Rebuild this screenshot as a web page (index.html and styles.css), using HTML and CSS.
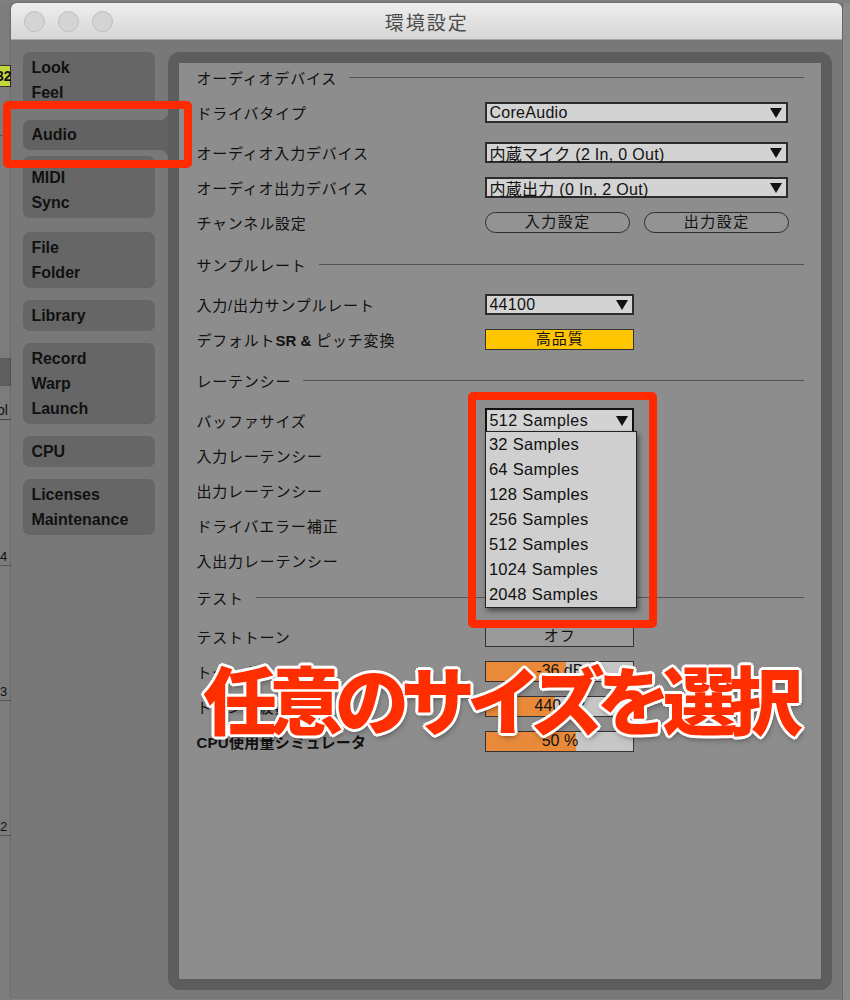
FILE: index.html
```html
<!DOCTYPE html>
<html lang="ja">
  <head>
    <meta charset="utf-8">
    <title>環境設定</title>
    <link rel="stylesheet" href="styles.css">
  </head>
  <body>
    <div class="desk">
      <div class="edge-left">
        <div class="clip-tag">32</div>
        <div class="edge-line"></div>
        <div class="edge-block"></div>
        <div class="edge-text">ol</div>
        <div class="edge-num first">4</div>
        <div class="edge-num">3</div>
        <div class="edge-num">2</div>
      </div>

      <div class="window">
        <div class="titlebar">
          <div class="lights"><span></span><span></span><span></span></div>
          <div class="title">環境設定</div>
          <div></div>
        </div>

        <div class="win-body">
          <div class="sidebar">
            <div class="tab-group"><div>Look</div><div>Feel</div></div>
            <div class="tab-group selected"><div>Audio</div></div>
            <div class="tab-group after-sel"><div>MIDI</div><div>Sync</div></div>
            <div class="tab-group"><div>File</div><div>Folder</div></div>
            <div class="tab-group"><div>Library</div></div>
            <div class="tab-group"><div>Record</div><div>Warp</div><div>Launch</div></div>
            <div class="tab-group"><div>CPU</div></div>
            <div class="tab-group"><div>Licenses</div><div>Maintenance</div></div>
          </div>

          <div class="panel">
            <div class="head"><span>オーディオデバイス</span></div>
            <div class="row mt4">
              <label>ドライバタイプ</label>
              <div class="drop wide">CoreAudio</div>
            </div>
            <div class="row mt5">
              <label>オーディオ入力デバイス</label>
              <div class="drop wide">内蔵マイク (2 In, 0 Out)</div>
            </div>
            <div class="row">
              <label>オーディオ出力デバイス</label>
              <div class="drop wide">内蔵出力 (0 In, 2 Out)</div>
            </div>
            <div class="row">
              <label>チャンネル設定</label>
              <div class="pills">
                <div class="pill">入力設定</div>
                <div class="pill">出力設定</div>
              </div>
            </div>

            <div class="head mt10"><span>サンプルレート</span></div>
            <div class="row mt9">
              <label>入力/出力サンプルレート</label>
              <div class="drop narrow">44100</div>
            </div>
            <div class="row">
              <label>デフォルト<b>SR &amp;</b> ピッチ変換</label>
              <div class="box narrow quality">高品質</div>
            </div>

            <div class="head mt9"><span>レーテンシー</span></div>
            <div class="row mt9">
              <label>バッファサイズ</label>
              <div class="drop narrow open">512 Samples
                <ul class="menu">
                  <li>32 Samples</li>
                  <li>64 Samples</li>
                  <li>128 Samples</li>
                  <li>256 Samples</li>
                  <li>512 Samples</li>
                  <li>1024 Samples</li>
                  <li>2048 Samples</li>
                </ul>
              </div>
            </div>
            <div class="row"><label>入力レーテンシー</label></div>
            <div class="row"><label>出力レーテンシー</label></div>
            <div class="row"><label>ドライバエラー補正</label></div>
            <div class="row"><label>入出力レーテンシー</label></div>

            <div class="head mt5"><span>テスト</span></div>
            <div class="row mt8">
              <label>テストトーン</label>
              <div class="box narrow">オフ</div>
            </div>
            <div class="row">
              <label>トーンボリューム</label>
              <div class="meter narrow">
                <span class="fill" style="width: 54%"></span>
                <span class="value">-36 dB</span>
              </div>
            </div>
            <div class="row">
              <label>トーン周波数</label>
              <div class="meter narrow">
                <span class="fill" style="width: 47%"></span>
                <span class="value">440 Hz</span>
              </div>
            </div>
            <div class="row">
              <label class="strong">CPU使用量シミュレータ</label>
              <div class="meter narrow">
                <span class="fill" style="width: 61%"></span>
                <span class="value">50 %</span>
              </div>
            </div>
          </div>
        </div>
      </div>

      <div class="edge-right"></div>

      <!-- annotation overlays -->
      <div class="mark mark-tab"></div>
      <div class="mark mark-buffer"></div>
      <div class="caption">任意のサイズを選択</div>
    </div>
  </body>
</html>
```

FILE: styles.css
```css
body {
  margin: 0;
  background: #7e7e7e;
  font-family: "Liberation Sans", "Noto Sans CJK JP", sans-serif;
  color: #111;
}

.desk {
  position: relative;
  display: flex;
  width: 850px;
  height: 1000px;
  padding-top: 3px;
  box-sizing: border-box;
  overflow: hidden;
  background: #808080;
}

/* bits of the app behind the window */
.edge-left {
  width: 12px;
  display: flex;
  flex-direction: column;
  overflow: hidden;
  background: #7c7c7c;
}

.clip-tag {
  margin-top: 62px;
  height: 20px;
  background: #c3d63a;
  border: 1px solid #333;
  border-left: 0;
  font-size: 14px;
  font-weight: bold;
  line-height: 20px;
  text-indent: -4px;
}

.edge-line {
  margin-top: 48px;
  height: 1px;
  background: #5a5a5a;
}

.edge-block {
  margin-top: 222px;
  height: 28px;
  background: #5e5e5e;
}

.edge-text {
  margin-top: 15px;
  font-size: 14px;
  line-height: 18px;
  text-indent: -3px;
  border-bottom: 1px solid #444;
}

.edge-num {
  margin-top: 118px;
  font-size: 13px;
  line-height: 16px;
  border-bottom: 1px solid #555;
}

.edge-num.first {
  margin-top: 129px;
}

.edge-right {
  width: 7px;
  background: #8a8a8a;
  border-left: 1px solid #666;
}

/* window */
.window {
  width: 831px;
  height: 994px;
  display: flex;
  flex-direction: column;
  background: #787878;
  border-radius: 6px 6px 0 0;
  box-shadow: 0 0 2px rgba(0, 0, 0, 0.45);
}

.titlebar {
  height: 37px;
  box-sizing: border-box;
  display: grid;
  grid-template-columns: 1fr auto 1fr;
  align-items: center;
  background: linear-gradient(#eeeeee, #d6d6d6);
  border-bottom: 1px solid #a8a8a8;
  border-radius: 6px 6px 0 0;
}

.lights {
  display: flex;
  gap: 13px;
  padding-left: 13px;
}

.lights span {
  width: 19px;
  height: 19px;
  border-radius: 50%;
  background: #d4d4d4;
  border: 1px solid #bdbdbd;
}

.title {
  font-family: "Noto Sans CJK JP", sans-serif;
  font-size: 19px;
  letter-spacing: 2px;
  color: #4a4a4a;
  padding-top: 1px;
}

.win-body {
  flex: 1;
  display: flex;
  gap: 13px;
  padding: 12px 10px 7px 12px;
}

/* sidebar */
.sidebar {
  width: 132px;
  display: flex;
  flex-direction: column;
}

.tab-group {
  background: #666666;
  border-radius: 7px;
  padding: 3px 8px;
  margin-bottom: 12px;
}

.tab-group div {
  height: 25px;
  line-height: 25px;
  font-size: 16px;
  font-weight: bold;
  color: #111;
}

.tab-group.selected {
  position: relative;
  width: 145px;
  box-sizing: border-box;
  height: 30px;
  padding: 2px 8px;
  border-radius: 7px 0 0 7px;
  background: #626262;
  margin-bottom: 6px;
}

.tab-group.selected::before,
.tab-group.selected::after {
  content: "";
  position: absolute;
  right: 0;
  width: 9px;
  height: 9px;
}

.tab-group.selected::before {
  top: -9px;
  background: radial-gradient(circle at 0 0, transparent 9px, #626262 9.5px);
}

.tab-group.selected::after {
  bottom: -9px;
  background: radial-gradient(circle at 0 100%, transparent 9px, #626262 9.5px);
}

.tab-group.after-sel {
  padding-top: 9px;
  margin-bottom: 14px;
}

/* main panel */
.panel {
  position: relative;
  width: 664px;
  box-sizing: border-box;
  border: 11px solid #5d5d5d;
  border-radius: 12px;
  background: #8d8d8d;
  padding: 0 17px;
  font-size: 15px;
}

.head {
  display: flex;
  align-items: center;
  height: 28px;
  letter-spacing: 0.8px;
  font-family: "Noto Sans CJK JP", sans-serif;
}

.head::after {
  content: "";
  flex: 1;
  height: 1px;
  margin-left: 12px;
  background: #555;
}

.row {
  display: flex;
  align-items: center;
  height: 35px;
}

.row label {
  width: 289px;
  flex-shrink: 0;
  letter-spacing: 0.8px;
}

.row label b {
  letter-spacing: 0;
}

.row label.strong {
  font-weight: bold;
  letter-spacing: 0.3px;
}

.mt4 { margin-top: 4px; }
.mt5 { margin-top: 5px; }
.mt8 { margin-top: 8px; }
.mt9 { margin-top: 9px; }
.mt10 { margin-top: 10px; }

.wide { width: 303px; }
.narrow { width: 149px; }

.drop {
  position: relative;
  box-sizing: border-box;
  height: 21px;
  display: flex;
  align-items: center;
  justify-content: space-between;
  padding: 0 4px 0 2px;
  background: #d3d3d3;
  border: 2px solid #2c2c2c;
  font-size: 16px;
  letter-spacing: 0.3px;
  white-space: nowrap;
}

.drop::after {
  content: "";
  border-left: 6px solid transparent;
  border-right: 6px solid transparent;
  border-top: 10px solid #111;
}

.drop.open {
  height: 25px;
  border: 2.5px solid #111;
  letter-spacing: 0.5px;
}

.menu {
  position: absolute;
  top: 100%;
  left: -2.5px;
  width: 152px;
  box-sizing: border-box;
  margin: 0;
  padding: 0;
  list-style: none;
  background: #cfcfcf;
  border: 1.5px solid #222;
  box-shadow: 2px 3px 5px rgba(0, 0, 0, 0.45);
  z-index: 2;
}

.menu li {
  height: 25px;
  line-height: 25px;
  padding-left: 3px;
  font-size: 16.5px;
  letter-spacing: 0.3px;
}

.pills {
  display: flex;
  gap: 14px;
}

.pill {
  box-sizing: border-box;
  width: 145px;
  height: 21px;
  line-height: 18px;
  text-align: center;
  border: 1.5px solid #2d2d2d;
  border-radius: 11px;
  background: #939393;
  letter-spacing: 1.5px;
}

.box {
  box-sizing: border-box;
  height: 21px;
  line-height: 18px;
  text-align: center;
  border: 1.5px solid #333;
  background: #9a9a9a;
  letter-spacing: 1px;
}

.box.quality {
  background: #ffc500;
}

.meter {
  box-sizing: border-box;
  height: 21px;
  display: grid;
  border: 1.5px solid #333;
  background: #c6c6c6;
}

.meter .fill,
.meter .value {
  grid-area: 1 / 1;
}

.meter .fill {
  background: #e9893a;
}

.meter .value {
  text-align: center;
  line-height: 18px;
  font-size: 16px;
}

/* annotations */
.mark {
  position: absolute;
  box-sizing: border-box;
  border: 8px solid #ff2a00;
  border-radius: 5px;
  z-index: 3;
}

.mark-tab {
  left: 3px;
  top: 101px;
  width: 189px;
  height: 67px;
}

.mark-buffer {
  left: 468px;
  top: 392px;
  width: 189px;
  height: 236px;
}

.caption {
  position: absolute;
  left: 203px;
  top: 660px;
  z-index: 4;
  font-family: "Noto Sans CJK JP", sans-serif;
  font-weight: 900;
  font-size: 74px;
  line-height: 1;
  letter-spacing: -8px;
  color: #ff2e00;
  white-space: nowrap;
  text-shadow:
    3px 0 #fff, -3px 0 #fff, 0 3px #fff, 0 -3px #fff,
    2px 2px #fff, -2px -2px #fff, 2px -2px #fff, -2px 2px #fff,
    1px 3px 6px rgba(0, 0, 0, 0.55);
}
```
